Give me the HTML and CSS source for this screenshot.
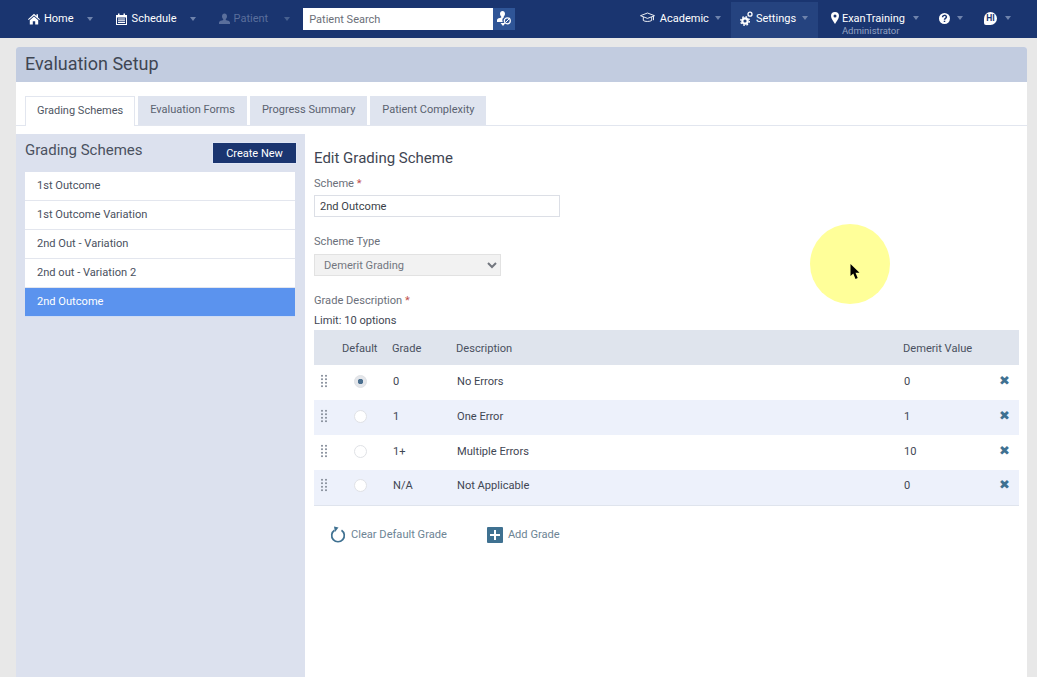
FILE: index.html
```html
<!DOCTYPE html>
<html lang="en">
<head>
    <meta charset="UTF-8">
    <title>Evaluation Setup</title>
    <link rel="stylesheet" href="styles.css">
</head>
<body>
    <!-- top nav -->
    <nav class="topnav">
        <div class="nav-left">
            <a class="nav-item item-home">
                <svg class="nav-icon" width="12" height="12" viewBox="0 0 12 12"><path d="M6 .8 0 6.200l.7.8L6 2.400l5.300 4.600.7-.8-2-1.800V1.200H8.500v1.700zM1.800 7.200V11.500h3V8.300h2.400v3.200h3V7.200L6 3.500z"/></svg>
                <span>Home</span><i class="caret"></i>
            </a>
            <a class="nav-item item-schedule">
                <svg class="nav-icon" width="11" height="12" viewBox="0 0 11 12"><path d="M0 2h2V.5h1.500V2h4V.5H9V2h2v10H0zM1 4.500v6.500h9V4.500zM2 5.500h7v1H2zM2 7.300h7v1H2zM2 9h7v1H2z"/></svg>
                <span>Schedule</span><i class="caret"></i>
            </a>
            <a class="nav-item item-patient disabled">
                <svg class="nav-icon" width="11" height="12" viewBox="0 0 11 12"><path d="M5.500.5C7 .5 8 1.700 8 3.300c0 1.200-.5 2.200-1.200 2.800v1c1.500.5 4.200 1 4.200 2.400v1.500H0V9.500c0-1.400 2.700-1.900 4.200-2.400v-1C3.500 5.500 3 4.500 3 3.300 3 1.700 4 .5 5.500.5z"/></svg>
                <span>Patient</span><i class="caret"></i>
            </a>
            <div class="search">
                <input class="search-input" type="text" placeholder="Patient Search">
                <button class="search-btn">
                    <svg width="14" height="16" viewBox="0 0 14 16"><path fill="#fff" d="M5.500 0C7 0 8 1.200 8 2.800c0 1.100-.5 2.100-1.200 2.700v1.100c-1.600.8-1.800 3-1 4.400H0V9c0-1.400 2.700-1.900 4.200-2.400v-1.100C3.500 4.900 3 3.900 3 2.800 3 1.200 4 0 5.500 0zM3.500 12h5l-2.500 3z"/><circle cx="10.300" cy="9.800" r="3" fill="none" stroke="#fff" stroke-width="1.200"/><path stroke="#fff" d="M8.500 11.500l3.500-3.500"/></svg>
                </button>
            </div>
        </div>
        <div class="nav-right">
            <a class="nav-item item-academic">
                <svg class="nav-icon" width="15" height="12" viewBox="0 0 15 12"><path fill="none" stroke="#fff" stroke-width=".9" d="M7.500 1 14.500 3.700 7.500 6.400.5 3.700zM3.300 5v3.500c1.500 1.300 6.500 1.300 8.400 0V5M13.500 4.200v4"/></svg>
                <span>Academic</span><i class="caret"></i>
            </a>
            <a class="nav-item item-settings active">
                <svg class="nav-icon" width="13" height="15" viewBox="0 0 13 15"><circle cx="5" cy="10" r="2.700" fill="none" stroke="#fff" stroke-width="2.200"/><circle cx="5" cy="10" r="4.300" fill="none" stroke="#fff" stroke-width="1.400" stroke-dasharray="1.700 1.680"/><circle cx="10" cy="3.200" r="2" fill="none" stroke="#fff" stroke-width="1.300"/></svg>
                <span>Settings</span><i class="caret"></i>
            </a>
            <a class="nav-item item-user">
                <svg class="nav-icon" width="8" height="12" viewBox="0 0 8 12"><path fill-rule="evenodd" d="M4 0a4 4 0 0 1 4 4c0 2.500-2.500 5.500-4 8C2.500 9.500 0 6.500 0 4a4 4 0 0 1 4-4zm0 2.500a1.500 1.500 0 1 0 0 3 1.500 1.500 0 0 0 0-3z"/></svg>
                <span class="user-name">ExanTraining<small>Administrator</small></span><i class="caret"></i>
            </a>
            <a class="nav-item item-help">
                <svg class="nav-icon" width="11" height="11" viewBox="0 0 11 11"><circle cx="5.500" cy="5.500" r="5.500"/><path fill="none" stroke="#1a3570" stroke-width="1.500" d="M3.600 4.200c0-2.400 3.800-2.400 3.800-.2 0 1.300-1.900 1.300-1.900 2.700"/><path stroke="#1a3570" stroke-width="1.500" d="M5.500 7.700v1.300"/></svg>
                <i class="caret"></i>
            </a>
            <a class="nav-item item-hi">
                <span class="hi-bubble">HI</span><i class="caret"></i>
            </a>
        </div>
    </nav>

    <main class="card">
        <h1 class="page-title">Evaluation Setup</h1>

        <div class="tabs">
            <a class="tab current">Grading Schemes</a>
            <a class="tab">Evaluation Forms</a>
            <a class="tab">Progress Summary</a>
            <a class="tab">Patient Complexity</a>
        </div>

        <div class="columns">
            <!-- list of schemes -->
            <aside class="sidebar">
                <div class="sidebar-head">
                    <h2>Grading Schemes</h2>
                    <button class="create-btn">Create New</button>
                </div>
                <ul class="scheme-list">
                    <li>1st Outcome</li>
                    <li>1st Outcome Variation</li>
                    <li>2nd Out - Variation</li>
                    <li>2nd out - Variation 2</li>
                    <li class="selected">2nd Outcome</li>
                </ul>
            </aside>

            <!-- edit form -->
            <section class="editor">
                <h2>Edit Grading Scheme</h2>
                <label class="field-label">Scheme <em>*</em></label>
                <input class="text-field" type="text" value="2nd Outcome">
                <label class="field-label type-label">Scheme Type</label>
                <select class="select-field" disabled>
                    <option>Demerit Grading</option>
                </select>
                <label class="field-label desc-label">Grade Description <em>*</em></label>
                <p class="limit">Limit: 10 options</p>

                <table class="grades">
                    <colgroup>
                        <col class="col-drag"><col class="col-default"><col class="col-grade"><col class="col-desc"><col class="col-value"><col>
                    </colgroup>
                    <thead>
                        <tr><th></th><th>Default</th><th>Grade</th><th>Description</th><th>Demerit Value</th><th></th></tr>
                    </thead>
                    <tbody>
                        <tr>
                            <td class="drag"><span class="dots"></span></td>
                            <td><span class="radio on"></span></td>
                            <td>0</td><td>No Errors</td><td>0</td>
                            <td class="remove">&#10006;</td>
                        </tr>
                        <tr>
                            <td class="drag"><span class="dots"></span></td>
                            <td><span class="radio"></span></td>
                            <td>1</td><td>One Error</td><td>1</td>
                            <td class="remove">&#10006;</td>
                        </tr>
                        <tr>
                            <td class="drag"><span class="dots"></span></td>
                            <td><span class="radio"></span></td>
                            <td>1+</td><td>Multiple Errors</td><td>10</td>
                            <td class="remove">&#10006;</td>
                        </tr>
                        <tr>
                            <td class="drag"><span class="dots"></span></td>
                            <td><span class="radio"></span></td>
                            <td>N/A</td><td>Not Applicable</td><td>0</td>
                            <td class="remove">&#10006;</td>
                        </tr>
                    </tbody>
                </table>

                <div class="grade-actions">
                    <a class="action">
                        <svg width="16" height="17" viewBox="0 0 16 17"><path fill="none" stroke="#3f7191" stroke-width="1.700" d="M4.500 4.200a6.300 6.300 0 1 0 7 0"/><path fill="#3f7191" d="M4 .5 8.500 1.500 5 6z"/></svg>
                        Clear Default Grade
                    </a>
                    <a class="action add">
                        <span class="plus-box"></span>
                        Add Grade
                    </a>
                </div>
            </section>
        </div>
    </main>

    <!-- cursor highlight from the recording -->
    <div class="cursor-spot">
        <svg width="10" height="16" viewBox="0 0 10 16"><path d="M.5 0v12l2.800-2.600 2.200 5.600 2.200-1-2.200-5.200 4 0z"/></svg>
    </div>
</body>
</html>
```

FILE: styles.css
```css
* {
    box-sizing: border-box;
}

body {
    margin: 0;
    height: 100vh;
    overflow: hidden;
    display: flex;
    flex-direction: column;
    font-family: Roboto, "Liberation Sans", sans-serif;
    font-size: 11.100px;
    color: #4a5160;
    background-color: #e8e8e8;
    position: relative;
}

h1, h2, p, ul {
    margin: 0;
    padding: 0;
    font-weight: 400;
}

/* top nav */
.topnav {
    height: 38px;
    flex: none;
    display: flex;
    justify-content: space-between;
    background: #1a3570;
    color: #fff;
    font-size: 11px;
}

.nav-left, .nav-right {
    display: flex;
    align-items: stretch;
}

.nav-left {
    padding-left: 28px;
}

.nav-right {
    padding-top: 2px;
    padding-right: 26px;
}

.nav-item {
    display: flex;
    align-items: center;
    padding-bottom: 1px;
}

.nav-right .nav-item {
    padding-bottom: 4px;
}

.nav-icon {
    fill: #fff;
    flex: none;
}

.caret {
    width: 0;
    height: 0;
    border-left: 3.500px solid transparent;
    border-right: 3.500px solid transparent;
    border-top: 4px solid #6f83ac;
}

.item-home { margin-right: 23px; gap: 4px; }
.item-home .caret { margin-left: 9px; }
.item-schedule { margin-right: 23px; gap: 5px; }
.item-schedule .caret { margin-left: 8px; }
.item-patient { gap: 4px; margin-right: 13px; }
.item-patient .caret { margin-left: 12px; }

.disabled {
    color: #5a6f9c;
}

.disabled .nav-icon {
    fill: #5a6f9c;
}

.disabled .caret {
    border-top-color: #47608f;
}

.search {
    display: flex;
    height: 22px;
    margin-top: 8px;
}

.search-input {
    width: 190px;
    height: 22px;
    border: none;
    padding: 1px 6px 0;
    font: 11px Roboto, sans-serif;
    background: #fff;
}

.search-input::placeholder {
    color: #6b6f78;
}

.search-btn {
    width: 22px;
    height: 22px;
    border: none;
    padding: 3px 0 0;
    background: #2f5597;
}

.item-academic { gap: 5px; margin-right: 10px; }
.item-academic .caret { margin-left: 1px; }

.item-settings {
    width: 87px;
    padding-left: 9px;
    gap: 3px;
    margin-right: 13px;
}

.item-settings .caret { margin-left: 3px; }

.active {
    background: #25437f;
}

.item-user { gap: 3px; margin-right: 20px; }
.item-user .caret { margin-left: 5px; }

.user-name {
    position: relative;
}

.user-name small {
    position: absolute;
    left: 0;
    top: 13px;
    font-size: 9.500px;
    color: #93a2c2;
}

.item-help { gap: 7px; margin-right: 21px; }

.item-hi { gap: 8px; }

.hi-bubble {
    width: 13px;
    height: 13px;
    border-radius: 50% 50% 50% 2px;
    background: #fff;
    color: #1a3570;
    font-size: 8.500px;
    font-weight: 700;
    line-height: 13px;
    text-align: center;
}

/* page card */
.card {
    flex: 1;
    margin: 9px 10px 0 16px;
    background: #fff;
    border-radius: 3px 3px 0 0;
    display: flex;
    flex-direction: column;
    min-height: 0;
}

.page-title {
    height: 35px;
    flex: none;
    padding-left: 9px;
    background: #c2cce0;
    border-radius: 3px 3px 0 0;
    font-size: 18px;
    line-height: 34px;
    color: #3f4653;
}

.tabs {
    flex: none;
    display: flex;
    gap: 3px;
    height: 30px;
    margin-top: 14px;
    padding-left: 9px;
    border-bottom: 1px solid #e2e6ef;
    font-size: 11px;
}

.tab {
    padding: 0 12px;
    line-height: 28px;
    background: #dfe4ef;
    color: #5a6270;
}

.tab.current {
    background: #fff;
    height: 30px;
    border: 1px solid #e2e6ef;
    border-bottom: none;
    padding: 0 11px;
    color: #4f5663;
}

.columns {
    flex: 1;
    display: flex;
    margin-top: 8px;
    min-height: 0;
}

/* left list */
.sidebar {
    width: 289px;
    flex: none;
    padding: 8px 10px 0 9px;
    background: #dce1ee;
}

.sidebar-head {
    display: flex;
    justify-content: space-between;
    align-items: flex-start;
    margin-right: -2px;
    height: 30px;
}

.sidebar-head h2 {
    font-size: 15px;
    line-height: 17px;
    color: #4a5160;
}

.create-btn {
    width: 85px;
    height: 22px;
    border: 1px solid #dfe6f5;
    padding: 0;
    background: #1a3570;
    color: #fff;
    font: 11px Roboto, sans-serif;
}

.scheme-list {
    list-style: none;
    background: #fff;
}

.scheme-list li {
    height: 29px;
    padding-left: 12px;
    line-height: 28px;
    border-bottom: 1px solid #e3e6ee;
}

.scheme-list .selected {
    background: #5b93ee;
    color: #fff;
    border-bottom-color: #cfdcf3;
}

/* right form */
.editor {
    width: 722px;
    padding: 15px 0 0 9px;
}

.editor h2 {
    font-size: 15px;
    line-height: 18px;
    color: #3f4653;
}

.field-label {
    display: block;
    margin-top: 10px;
    line-height: 14px;
    color: #6b707a;
}

.field-label em {
    font-style: normal;
    color: #c0504d;
}

.text-field {
    display: block;
    width: 246px;
    height: 22px;
    margin-top: 4px;
    padding: 0 5px;
    border: 1px solid #dcdfe6;
    font: 11.100px Roboto, sans-serif;
    color: #3a3f48;
}

.type-label {
    margin-top: 18px;
}

.select-field {
    display: block;
    width: 187px;
    height: 22px;
    margin-top: 5px;
    border: 1px solid #e2e2e2;
    border-radius: 0;
    padding-left: 5px;
    background: #f2f2f2;
    font: 11.100px Roboto, sans-serif;
    color: #73777f;
    opacity: 1;
}

.desc-label {
    margin-top: 18px;
}

.limit {
    margin-top: 6px;
    line-height: 14px;
    color: #3f4653;
}

.grades {
    width: 705px;
    margin-top: 2px;
    border-collapse: collapse;
    table-layout: fixed;
}

.col-drag { width: 28px; }
.col-default { width: 50px; }
.col-grade { width: 64px; }
.col-desc { width: 447px; }
.col-value { width: 96px; }

.grades th {
    height: 35px;
    padding: 2px 0 0;
    background: #dfe4ed;
    font-weight: 400;
    text-align: left;
    color: #4a5160;
}

.grades td {
    height: 35px;
    padding: 0 0 3px 1px;
    color: #3f4653;
}

.grades tbody tr:nth-child(even) td {
    background: #edf1fb;
}

.grades tbody tr:last-child td {
    border-bottom: 1px solid #dfe4ed;
}

.dots {
    display: block;
    width: 8px;
    height: 14px;
    margin: -1px 0 0 5px;
    background-image: radial-gradient(circle, #8f96a2 0.8px, transparent 1.100px);
    background-size: 4px 3.500px;
}

.radio {
    display: block;
    width: 13px;
    height: 13px;
    margin-left: 11px;
    border-radius: 50%;
    background: #fff;
    border: 1px solid #e0e2e6;
}

.radio.on {
    background: radial-gradient(circle, #4a6f8f 2.500px, #e4e6ea 3px);
}

.grades .remove {
    padding-bottom: 5px;
    padding-left: 0;
    font-size: 13px;
    color: #3f7191;
}

.grade-actions {
    display: flex;
    margin-top: 20px;
    padding-left: 16px;
    gap: 40px;
}

.action {
    display: flex;
    align-items: center;
    gap: 5px;
    height: 18px;
    color: #6d8494;
}

.plus-box {
    width: 16px;
    height: 16px;
    border-radius: 1px;
    background:
        linear-gradient(#fff, #fff) center / 10px 2px no-repeat,
        linear-gradient(#fff, #fff) center / 2px 10px no-repeat,
        #3f7191;
}

/* yellow spot and pointer, they lie over the page */
.cursor-spot {
    position: absolute;
    left: 810px;
    top: 224px;
    width: 80px;
    height: 80px;
    border-radius: 50%;
    background: #ffff99;
}

.cursor-spot svg {
    position: absolute;
    left: 40px;
    top: 40px;
}
```
